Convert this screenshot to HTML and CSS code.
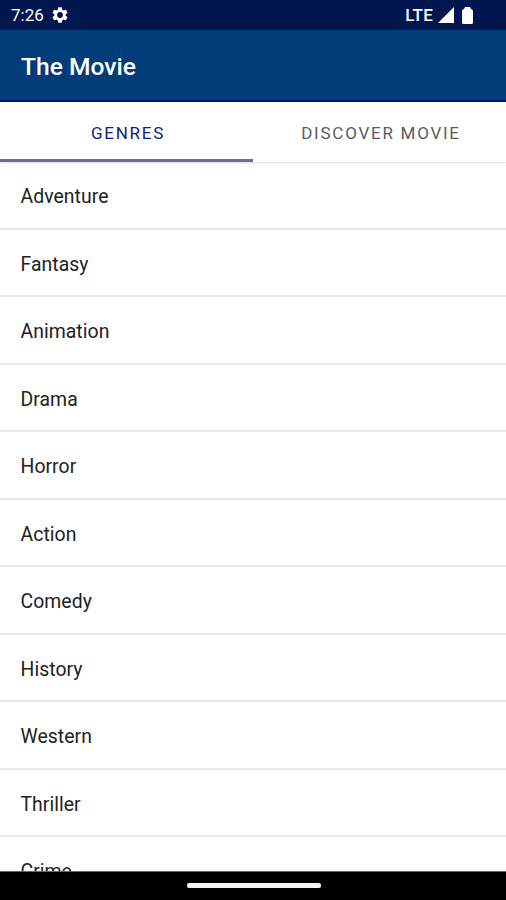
FILE: index.html
```
<!DOCTYPE html>
<html lang="en">
<head>
    <meta charset="UTF-8">
    <meta name="viewport" content="width=device-width, initial-scale=1.0">
    <title>The Movie</title>
    <link rel="stylesheet" href="styles.css">
</head>
<body>

    <div class="status-bar">
        <span class="time">7:26</span>
        <svg class="gear" viewBox="2 2 20 20" width="16" height="16">
            <path fill="#fff" fill-rule="evenodd" d="M19.14 12.94c.04-.3.06-.61.06-.94 0-.32-.02-.64-.07-.94l2.03-1.58a.49.49 0 0 0 .12-.61l-1.92-3.32a.49.49 0 0 0-.59-.22l-2.39.96c-.5-.38-1.03-.7-1.62-.94l-.36-2.54a.48.48 0 0 0-.48-.41h-3.84a.47.47 0 0 0-.47.41l-.36 2.54c-.59.24-1.13.57-1.62.94l-2.39-.96a.48.48 0 0 0-.59.22L2.74 8.87a.48.48 0 0 0 .12.61l2.03 1.58c-.05.3-.09.63-.09.94s.02.64.07.94l-2.03 1.58a.49.49 0 0 0-.12.61l1.92 3.32c.12.22.37.29.59.22l2.39-.96c.5.38 1.03.7 1.62.94l.36 2.54c.05.24.24.41.48.41h3.84c.24 0 .44-.17.47-.41l.36-2.54c.59-.24 1.13-.56 1.62-.94l2.39.96c.22.08.47 0 .59-.22l1.92-3.32a.47.47 0 0 0-.12-.61zM12 15.6a3.6 3.6 0 1 1 0-7.2 3.6 3.6 0 0 1 0 7.2z"/>
        </svg>
        <span class="network">LTE</span>
        <svg class="signal" viewBox="0 0 16 16" width="16" height="16">
            <path fill="#fff" d="M0 16L16 0v16z"/>
        </svg>
        <svg class="battery" viewBox="0 0 11 17" width="11" height="17">
            <path fill="#fff" d="M3 0h5l1 2q2 .5 2 2V15.500q0 1.500-1.500 1.500h-8Q0 17 0 15.500V4q0-1.500 2-2z"/>
        </svg>
    </div>

    <header class="app-bar">
        <h1>The Movie</h1>
    </header>

    <nav class="tabs">
        <a class="tab active">GENRES</a>
        <a class="tab">DISCOVER MOVIE</a>
    </nav>

    <ul class="genre-list">
        <li>Adventure</li>
        <li>Fantasy</li>
        <li>Animation</li>
        <li>Drama</li>
        <li>Horror</li>
        <li>Action</li>
        <li>Comedy</li>
        <li>History</li>
        <li>Western</li>
        <li>Thriller</li>
        <li>Crime</li>
    </ul>

    <div class="nav-bar">
        <div class="handle"></div>
    </div>

</body>
</html>
```
FILE: styles.css
```
* {
    box-sizing: border-box;
}
body {
    font-family: Roboto, sans-serif;
    background-color: #fefefe;
    display: flex;
    flex-direction: column;
    height: 900px;
    margin: 0;
    overflow: hidden;
}
.status-bar {
    display: flex;
    align-items: center;
    flex: 0 0 30px;
    padding: 0 33px 0 11px;
    background-color: #00164f;
    color: #fff;
    font-size: 17px;
}
.gear {
    margin-left: 8px;
}
.network {
    margin-left: auto;
    font-weight: 500;
    font-size: 17px;
    letter-spacing: 0.2px;
}
.signal {
    margin-left: 5px;
}
.battery {
    margin-left: 8px;
}
.app-bar {
    display: flex;
    align-items: center;
    flex: 0 0 72px;
    padding: 3px 21px 0;
    background-color: #003d79;
    border-bottom: 2px solid #00146b;
    color: #fff;
}
.app-bar h1 {
    margin: 0;
    font-size: 24.6px;
    font-weight: 500;
}
.tabs {
    display: flex;
    flex: 0 0 60px;
    box-shadow: 0 1px 2px rgba(0, 0, 0, 0.14);
}
.tab {
    flex: 1;
    display: flex;
    align-items: center;
    justify-content: center;
    padding: 4px 0 0 3px;
    border-bottom: 3px solid transparent;
    color: #5c5c5c;
    font-size: 17px;
    letter-spacing: 1.75px;
}
.tab.active {
    color: #10207a;
    border-bottom-color: #6a7094;
}
.genre-list {
    flex: 1;
    min-height: 0;
    margin: 0;
    padding: 0;
    overflow: hidden;
    list-style: none;
}
.genre-list li {
    display: flex;
    align-items: center;
    height: 67.5px;
    padding: 3.5px 20.5px 0;
    border-bottom: 2px solid #e8e8e8;
    color: #222;
    font-size: 19.4px;
    letter-spacing: 0.05px;
}
.nav-bar {
    display: flex;
    justify-content: center;
    flex: 0 0 29px;
    padding-top: 11px;
    background-color: #000;
    border-top: 1px solid #666;
}
.handle {
    width: 134px;
    height: 5px;
    margin-left: 1px;
    border-radius: 2px;
    background-color: #f2f2f2;
}
```
